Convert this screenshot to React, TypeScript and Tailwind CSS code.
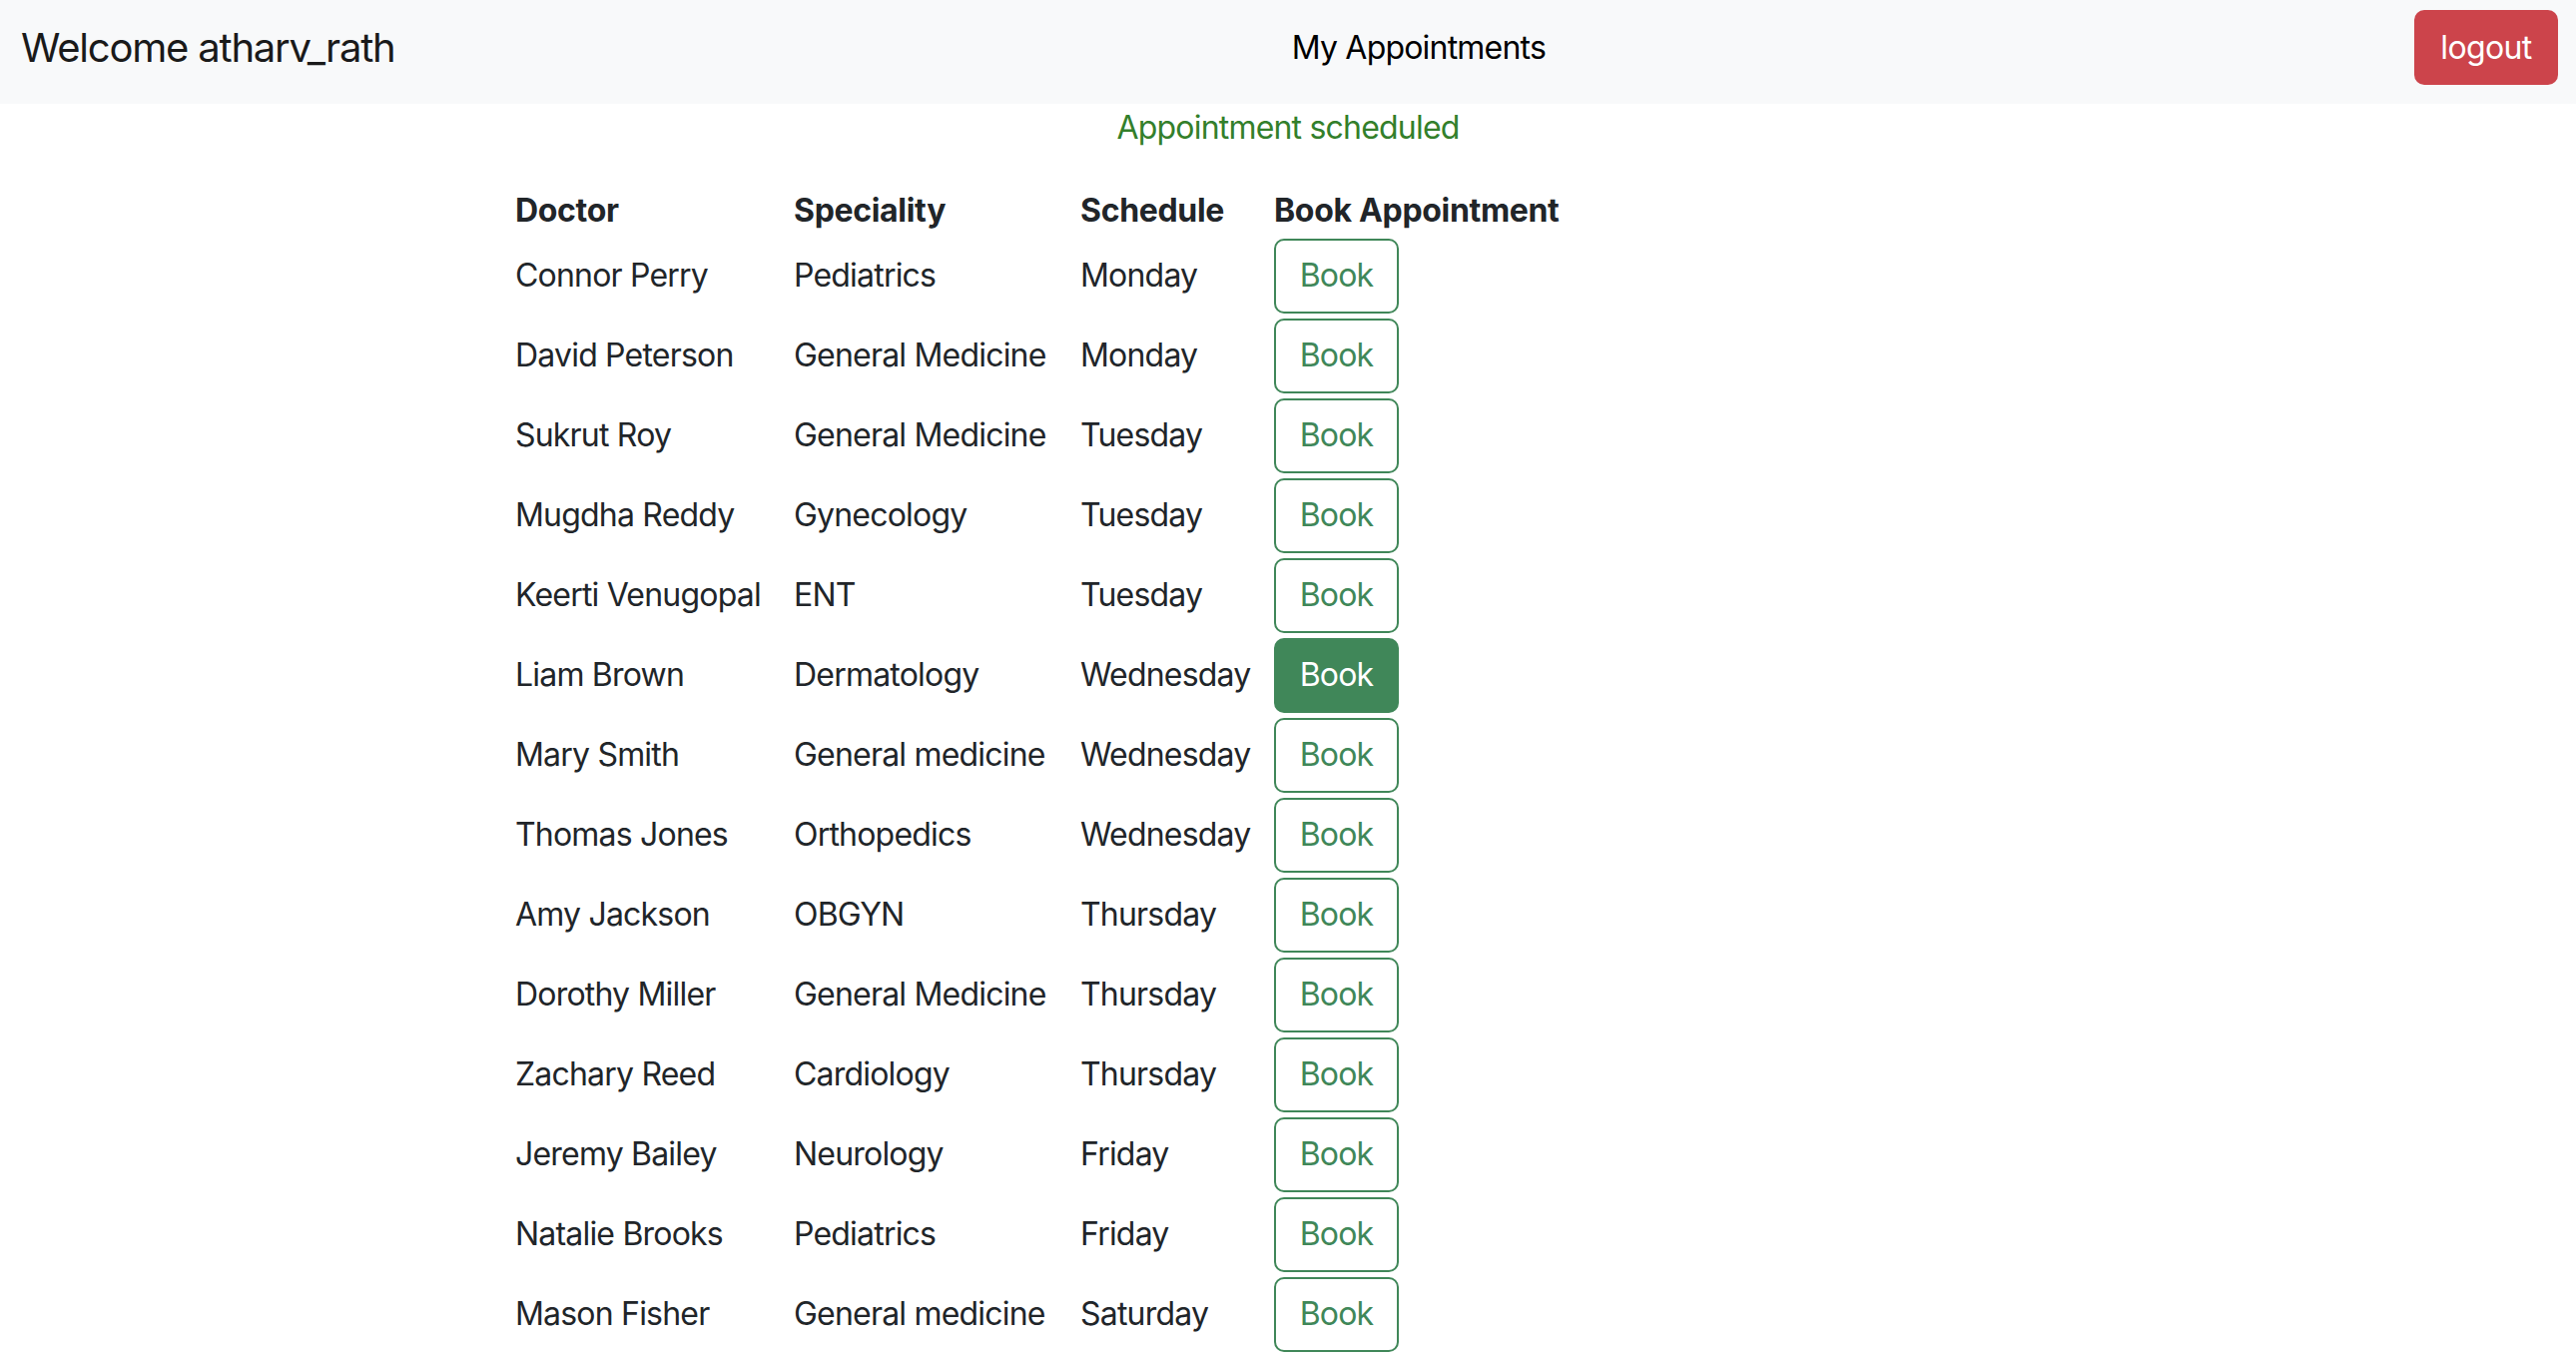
import React from "react";

type Doctor = {
  name: string;
  speciality: string;
  schedule: string;
};

const doctors: Doctor[] = [
  { name: "Connor Perry", speciality: "Pediatrics", schedule: "Monday" },
  { name: "David Peterson", speciality: "General Medicine", schedule: "Monday" },
  { name: "Sukrut Roy", speciality: "General Medicine", schedule: "Tuesday" },
  { name: "Mugdha Reddy", speciality: "Gynecology", schedule: "Tuesday" },
  { name: "Keerti Venugopal", speciality: "ENT", schedule: "Tuesday" },
  { name: "Liam Brown", speciality: "Dermatology", schedule: "Wednesday" },
  { name: "Mary Smith", speciality: "General medicine", schedule: "Wednesday" },
  { name: "Thomas Jones", speciality: "Orthopedics", schedule: "Wednesday" },
  { name: "Amy Jackson", speciality: "OBGYN", schedule: "Thursday" },
  { name: "Dorothy Miller", speciality: "General Medicine", schedule: "Thursday" },
  { name: "Zachary Reed", speciality: "Cardiology", schedule: "Thursday" },
  { name: "Jeremy Bailey", speciality: "Neurology", schedule: "Friday" },
  { name: "Natalie Brooks", speciality: "Pediatrics", schedule: "Friday" },
  { name: "Mason Fisher", speciality: "General medicine", schedule: "Saturday" },
];

function Navbar() {
  return (
    <nav className="flex h-[104px] items-center bg-[#f8f9fa] pb-[9px] pl-[21px] pr-[18px]">
      <span className="whitespace-nowrap text-[40px] leading-[48px] tracking-[-0.03em] text-[#1a1a1a]">
        Welcome atharv_rath
      </span>
      <a className="ml-auto mr-[870px] whitespace-nowrap text-[32px] leading-[48px] tracking-[-0.025em] text-black">
        My Appointments
      </a>
      <button className="h-[75px] w-[144px] rounded-[10px] bg-[#cc444b] text-[32px] tracking-[-0.02em] text-white">
        logout
      </button>
    </nav>
  );
}

export default function App() {
  const booked = "Liam Brown";

  return (
    <div className="min-h-screen bg-white font-['Inter','Noto_Sans',sans-serif] text-[#212529]">
      <Navbar />
      <p className="h-[48px] text-center text-[32px] leading-[48px] tracking-[-0.025em] text-[#337f2b]">
        Appointment scheduled
      </p>
      <table className="ml-[500px] mt-[34px] w-[1076px] table-fixed border-collapse whitespace-nowrap text-[32px] tracking-[-0.025em]">
        <thead>
          <tr className="h-[50px] text-left tracking-[-0.01em]">
            <th className="w-[279px] px-4 font-bold">Doctor</th>
            <th className="w-[287px] px-4 font-bold">Speciality</th>
            <th className="w-[194px] px-4 font-bold">Schedule</th>
            <th className="w-[316px] px-4 font-bold">Book Appointment</th>
          </tr>
        </thead>
        <tbody>
          {doctors.map((d) => (
            <tr key={d.name} className="h-[80px]">
              <td className="px-4">{d.name}</td>
              <td className="px-4">{d.speciality}</td>
              <td className="px-4">{d.schedule}</td>
              <td className="px-4">
                <button
                  className={
                    d.name === booked
                      ? "h-[75px] w-[125px] rounded-[10px] border-2 border-[#408759] bg-[#408759] text-white"
                      : "h-[75px] w-[125px] rounded-[10px] border-2 border-[#408759] bg-white text-[#408759]"
                  }
                >
                  Book
                </button>
              </td>
            </tr>
          ))}
        </tbody>
      </table>
    </div>
  );
}
